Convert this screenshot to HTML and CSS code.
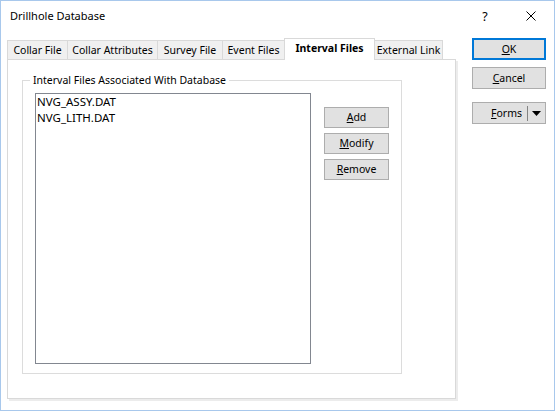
FILE: index.html
```html
<!DOCTYPE html>
<html>
<head>
<meta charset="utf-8">
<title>Drillhole Database</title>
<link rel="stylesheet" href="styles.css">
</head>
<body>
<div class="window">
  <div class="titlebar">
    <div class="title">Drillhole Database</div>
    <div class="capbtn help">?</div>
    <div class="capbtn close"><svg width="10" height="10" viewBox="0 0 10 10"><path d="M0.5 0.5L9.5 9.5M9.5 0.5L0.5 9.5" stroke="#000" stroke-width="1" fill="none"/></svg></div>
  </div>
  <div class="main">
    <div class="tabarea">
      <div class="tabs">
        <div class="tab t-collar">Collar File</div>
        <div class="tab t-attr">Collar Attributes</div>
        <div class="tab t-survey">Survey File</div>
        <div class="tab t-event">Event Files</div>
        <div class="tab t-interval active">Interval Files</div>
        <div class="tab t-external">External Link</div>
      </div>
      <div class="panel">
        <fieldset class="group">
          <legend>Interval Files Associated With Database</legend>
          <div class="grouprow">
            <div class="listbox">
              <div class="item">NVG_ASSY.DAT</div>
              <div class="item">NVG_LITH.DAT</div>
            </div>
            <div class="btncol">
              <button class="btn small"><u>A</u>dd</button>
              <button class="btn small"><u>M</u>odify</button>
              <button class="btn small"><u>R</u>emove</button>
            </div>
          </div>
        </fieldset>
      </div>
    </div>
    <div class="side">
      <button class="btn big default"><u>O</u>K</button>
      <button class="btn big cancel"><u>C</u>ancel</button>
      <button class="btn big forms"><span class="ftext"><u>F</u>orms</span><span class="fsep"></span><svg class="farrow" width="9" height="5" viewBox="0 0 9 5"><polygon points="0,0 9,0 4.5,5" fill="#000"/></svg></button>
    </div>
  </div>
</div>
</body>
</html>
```
FILE: styles.css
```css
html, body {
  margin: 0;
  padding: 0;
  background: #fff;
}
body {
  font-family: "Noto Sans", "Liberation Sans", sans-serif;
  font-size: 10.5px;
  color: #000;
}
.window {
  width: 555px;
  height: 411px;
  box-sizing: border-box;
  border: 1px solid #a8c8ec;
  background: #fff;
  display: flex;
  flex-direction: column;
}
.titlebar {
  height: 37px;
  flex: none;
  display: flex;
  align-items: flex-start;
}
.title {
  flex: 1;
  height: 30px;
  line-height: 30px;
  padding-left: 9px;
  font-size: 11px;
}
.capbtn {
  width: 46px;
  height: 30px;
  display: flex;
  align-items: center;
  justify-content: center;
}
.help {
  font-size: 12.5px;
}
.main {
  flex: 1;
  display: flex;
  padding-left: 6px;
}
.tabarea {
  width: 451px;
  display: flex;
  flex-direction: column;
}
.tabs {
  height: 21px;
  display: flex;
  align-items: flex-end;
}
.tab {
  box-sizing: border-box;
  height: 19px;
  border: 1px solid #d9d9d9;
  border-bottom: none;
  background: #f0f0f0;
  margin-left: -1px;
  padding-top: 2px;
  line-height: 15px;
  text-align: center;
  white-space: nowrap;
}
.t-collar { width: 61px; margin-left: 0; }
.t-attr { width: 91px; }
.t-survey { width: 66px; }
.t-event { width: 63px; }
.t-interval { width: 91px; }
.t-external { width: 69px; }
.tab.active {
  height: 22px;
  margin-bottom: -1px;
  background: #fff;
  font-weight: bold;
  position: relative;
  z-index: 1;
}
.panel {
  box-sizing: border-box;
  width: 449px;
  height: 340px;
  border: 1px solid #d9d9d9;
  background: #fff;
  box-shadow: 2px 2px 0 #ececec;
  padding: 13px 0 0 14px;
}
.group {
  box-sizing: border-box;
  width: 380px;
  margin: 0;
  padding: 0 0 9px 0;
  border: 1px solid #dcdcdc;
  min-width: 0;
}
.group legend {
  margin-left: 7px;
  padding: 0 3px;
  line-height: 14px;
}
.grouprow {
  display: flex;
  align-items: flex-start;
  padding: 6px 0 0 12px;
}
.listbox {
  box-sizing: border-box;
  width: 276px;
  height: 271px;
  border: 1px solid #828790;
  padding: 0 0 0 1px;
  font-size: 11.5px;
}
.item {
  line-height: 16px;
  height: 16px;
}
.btncol {
  display: flex;
  flex-direction: column;
  gap: 5px;
  margin: 14px 0 0 13px;
}
.btn {
  box-sizing: border-box;
  font-family: inherit;
  font-size: 10.5px;
  color: #000;
  background: #e1e1e1;
  border: 1px solid #adadad;
  padding: 0;
  margin: 0;
  line-height: 15px;
  text-align: center;
}
.btn u {
  text-underline-offset: 1px;
}
.small {
  width: 65px;
  height: 21px;
}
.side {
  margin-left: 14px;
  display: flex;
  flex-direction: column;
}
.big {
  width: 74px;
  height: 22px;
}
.default {
  border: 2px solid #0078d7;
}
.cancel {
  margin-top: 7px;
}
.forms {
  margin-top: 13px;
  display: flex;
  align-items: center;
  justify-content: flex-end;
  padding-right: 4px;
}
.fsep {
  width: 1px;
  height: 15px;
  background: #838383;
  margin-left: 5px;
}
.farrow {
  margin-left: 4px;
  display: block;
}
```
